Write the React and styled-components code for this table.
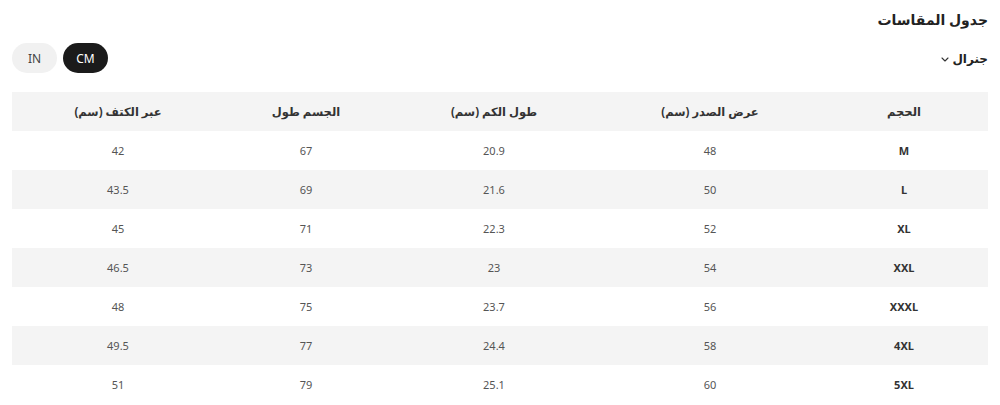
import React from "react"
import styled, { createGlobalStyle } from "styled-components"

const Global = createGlobalStyle`
    body {
        margin: 0;
        background: #fff;
        font-family: "Noto Sans", "DejaVu Sans", sans-serif;
        color: #222;
    }
`

const Page = styled.div`
    direction: rtl;
    padding: 10px 12px 0;
`

const Title = styled.h2`
    margin: 0;
    font-size: 14px;
    font-weight: 700;
    line-height: 20px;
    color: #222;
`

const Bar = styled.div`
    display: flex;
    justify-content: space-between;
    align-items: center;
    margin-top: 13px;
    height: 30px;
`

const Filter = styled.div`
    display: flex;
    align-items: center;
    gap: 3px;
    font-size: 12px;
    font-weight: 700;
    color: #222;

    svg {
        margin-top: 3px;
    }
`

const Units = styled.div`
    display: flex;
    direction: ltr;
    gap: 6px;
`

const Unit = styled.button`
    width: 45px;
    height: 30px;
    border: none;
    border-radius: 15px;
    padding: 0;
    font-family: "Noto Sans", "DejaVu Sans", sans-serif;
    font-weight: 400;
    font-size: 12px;
    background: ${p => (p.$active ? "#1b1b1b" : "#f1f1f1")};
    color: ${p => (p.$active ? "#fff" : "#444")};
`

const Table = styled.table`
    width: 100%;
    margin-top: 19px;
    border-collapse: collapse;
    table-layout: fixed;
`

const Row = styled.tr`
    height: 39px;
    background: ${p => (p.$shade ? "#f4f4f4" : "#fff")};
`

const Head = styled.th`
    font-size: 11.5px;
    font-weight: 700;
    color: #333;
    text-align: center;
    padding: 0;
`

const Cell = styled.td`
    font-size: 11px;
    color: #555;
    text-align: center;
    padding: 0;
    font-weight: ${p => (p.$bold ? 700 : 400)};
    ${p => p.$bold && "color: #333;"}
`

const widths = [168, 220, 212, 164, 212]
const heads = ["الحجم", "عرض الصدر (سم)", "طول الكم (سم)", "الجسم طول", "عبر الكتف (سم)"]
const rows = [
    ["M", "48", "20.9", "67", "42"],
    ["L", "50", "21.6", "69", "43.5"],
    ["XL", "52", "22.3", "71", "45"],
    ["XXL", "54", "23", "73", "46.5"],
    ["XXXL", "56", "23.7", "75", "48"],
    ["4XL", "58", "24.4", "77", "49.5"],
    ["5XL", "60", "25.1", "79", "51"],
]

const Chevron = () => (
    <svg width="8" height="5" viewBox="0 0 8 5" fill="none">
        <path d="M1 1l3 3 3-3" stroke="#333" strokeWidth="1.1" strokeLinecap="round" strokeLinejoin="round" />
    </svg>
)

const App = () => {
    return (
        <Page>
            <Global />
            <Title>جدول المقاسات</Title>
            <Bar>
                <Filter>
                    جنرال
                    <Chevron />
                </Filter>
                <Units>
                    <Unit>IN</Unit>
                    <Unit $active>CM</Unit>
                </Units>
            </Bar>
            <Table>
                <colgroup>
                    {widths.map((w, i) => (
                        <col key={i} style={{ width: w }} />
                    ))}
                </colgroup>
                <thead>
                    <Row $shade>
                        {heads.map(h => (
                            <Head key={h}>{h}</Head>
                        ))}
                    </Row>
                </thead>
                <tbody>
                    {rows.map((r, i) => (
                        <Row key={r[0]} $shade={i % 2 === 1}>
                            {r.map((v, j) => (
                                <Cell key={j} $bold={j === 0}>{v}</Cell>
                            ))}
                        </Row>
                    ))}
                </tbody>
            </Table>
        </Page>
    )
}

export default App
